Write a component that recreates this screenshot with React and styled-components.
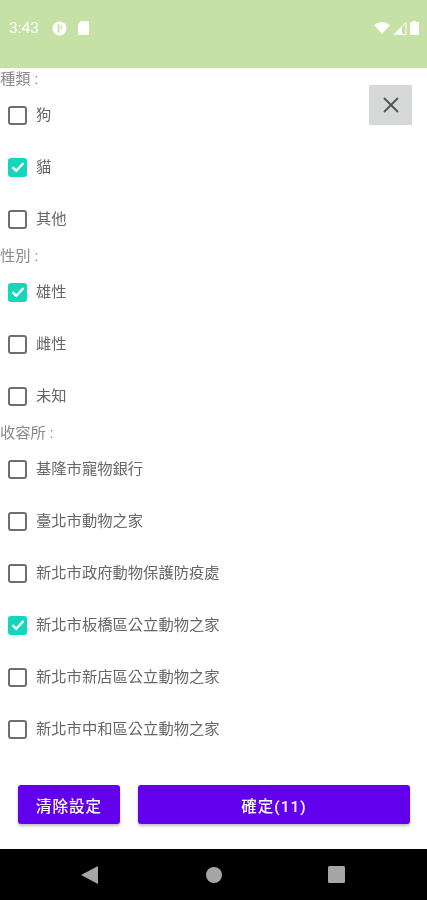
import React from "react"
import styled, { createGlobalStyle } from "styled-components"

const Global = createGlobalStyle`
    * { box-sizing: border-box; }
    html, body { margin: 0; padding: 0; background: #ffffff; }
    body { font-family: "Roboto", "Noto Sans CJK TC", sans-serif; }
`

const groups = [
    { title: "種類 :", items: [["狗", false], ["貓", true], ["其他", false]] },
    { title: "性別 :", items: [["雄性", true], ["雌性", false], ["未知", false]] },
    {
        title: "收容所 :",
        items: [
            ["基隆市寵物銀行", false],
            ["臺北市動物之家", false],
            ["新北市政府動物保護防疫處", false],
            ["新北市板橋區公立動物之家", true],
            ["新北市新店區公立動物之家", false],
            ["新北市中和區公立動物之家", false],
        ],
    },
]

function Check({ checked }) {
    if (!checked) return <EmptyBox />
    return (
        <FilledBox>
            <svg width="14" height="12" viewBox="0 0 14 12">
                <path d="M1.5 6.2 L5.2 9.8 L12.5 2" fill="none" stroke="#fff" strokeWidth="2.4" />
            </svg>
        </FilledBox>
    )
}

export default function App() {
    return (
        <Screen>
            <Global />
            <StatusBar>
                <StatusLeft>
                    <Time>3:43</Time>
                    <svg width="15" height="15" viewBox="0 0 16 16">
                        <circle cx="8" cy="8" r="7.5" fill="#fff" />
                        <path d="M6 3.5 h2 v9 h-2z M9.5 4 a2.8 2.8 0 0 1 0 5z" fill="#c5e1a5" />
                    </svg>
                    <svg width="12" height="14" viewBox="0 0 12 14">
                        <path d="M1 3 L4 0 H11 a1 1 0 0 1 1 1 V13 a1 1 0 0 1 -1 1 H2 a1 1 0 0 1 -1 -1z" fill="#fff" />
                    </svg>
                </StatusLeft>
                <StatusRight>
                    <svg width="16" height="12" viewBox="0 0 16 12">
                        <path d="M0 3 Q8 -3 16 3 L8 12z" fill="#fff" />
                    </svg>
                    <svg width="14" height="13" viewBox="0 0 14 13">
                        <path d="M13 0.5 V12.5 H1z" fill="none" stroke="#fff" strokeWidth="1" />
                        <path d="M9 5 V13 H1z" fill="#fff" />
                    </svg>
                    <svg width="9" height="14" viewBox="0 0 9 14">
                        <path d="M3 0 H6 V1 H8 a1 1 0 0 1 1 1 V13 a1 1 0 0 1 -1 1 H1 a1 1 0 0 1 -1 -1 V2 a1 1 0 0 1 1 -1 H3z" fill="#fff" />
                    </svg>
                </StatusRight>
            </StatusBar>

            <Content>
                <CloseButton aria-label="close">
                    <svg width="16" height="16" viewBox="0 0 16 16">
                        <path d="M1 1 L15 15 M15 1 L1 15" stroke="#555" strokeWidth="1.8" />
                    </svg>
                </CloseButton>
                {groups.map((group) => (
                    <section key={group.title}>
                        <GroupTitle>{group.title}</GroupTitle>
                        {group.items.map(([name, checked]) => (
                            <Row key={name}>
                                <Check checked={checked} />
                                <RowText>{name}</RowText>
                            </Row>
                        ))}
                    </section>
                ))}
            </Content>

            <Footer>
                <ClearButton>清除設定</ClearButton>
                <ConfirmButton>確定(11)</ConfirmButton>
            </Footer>

            <NavBar>
                <svg width="18" height="18" viewBox="0 0 18 18">
                    <path d="M17 0 V18 L0 9z" fill="#a6a6a6" />
                </svg>
                <svg width="16" height="16" viewBox="0 0 16 16">
                    <circle cx="8" cy="8" r="8" fill="#a6a6a6" />
                </svg>
                <svg width="17" height="17" viewBox="0 0 17 17">
                    <rect width="17" height="17" rx="1.5" fill="#a6a6a6" />
                </svg>
            </NavBar>
        </Screen>
    )
}

const Screen = styled.div`
    width: 427px;
    height: 900px;
    display: flex;
    flex-direction: column;
    overflow: hidden;
    background: #ffffff;
    filter: blur(0.6px);
`

const StatusBar = styled.div`
    height: 68px;
    flex-shrink: 0;
    background: #c5e1a5;
    padding: 0 8px 12px 9px;
    display: flex;
    align-items: center;
    justify-content: space-between;
`

const StatusLeft = styled.div`
    display: flex;
    align-items: center;
    gap: 10px;
`

const StatusRight = styled.div`
    display: flex;
    align-items: center;
    gap: 3px;
`

const Time = styled.span`
    font-size: 15.5px;
    color: #ffffff;
    margin-right: 3px;
`

const Content = styled.div`
    position: relative;
    height: 687px;
    flex-shrink: 0;
`

const CloseButton = styled.div`
    position: absolute;
    top: 17px;
    right: 15px;
    width: 43px;
    height: 40px;
    border-radius: 1px;
    background: #d6d7d7;
    display: flex;
    align-items: center;
    justify-content: center;
`

const GroupTitle = styled.div`
    height: 21px;
    line-height: 22px;
    font-size: 15.3px;
    color: #8a8a8a;
`

const Row = styled.div`
    height: 52px;
    padding-left: 8px;
    display: flex;
    align-items: center;
    gap: 9px;
`

const EmptyBox = styled.span`
    width: 19px;
    height: 19px;
    border: 2px solid #6e6e6e;
    border-radius: 3px;
`

const FilledBox = styled.span`
    width: 19px;
    height: 19px;
    border-radius: 3px;
    background: #14d6bd;
    display: flex;
    align-items: center;
    justify-content: center;
`

const RowText = styled.span`
    font-size: 15.3px;
    line-height: 20px;
    color: #666666;
`

const Footer = styled.div`
    flex: 1;
    padding: 30px 17px 0 18px;
    display: flex;
    align-items: flex-start;
    gap: 18px;
`

const ClearButton = styled.div`
    width: 102px;
    height: 39px;
    border-radius: 3px;
    background: #6200ee;
    color: #ffffff;
    font-size: 15.5px;
    font-weight: 500;
    letter-spacing: 1px;
    display: flex;
    align-items: center;
    justify-content: center;
    box-shadow: 0 2px 3px rgba(0, 0, 0, 0.25);
`

const ConfirmButton = styled(ClearButton)`
    width: auto;
    flex: 1;
`

const NavBar = styled.div`
    height: 51px;
    flex-shrink: 0;
    background: #000000;
    padding: 0 82px 0 81px;
    display: flex;
    align-items: center;
    justify-content: space-between;
`
